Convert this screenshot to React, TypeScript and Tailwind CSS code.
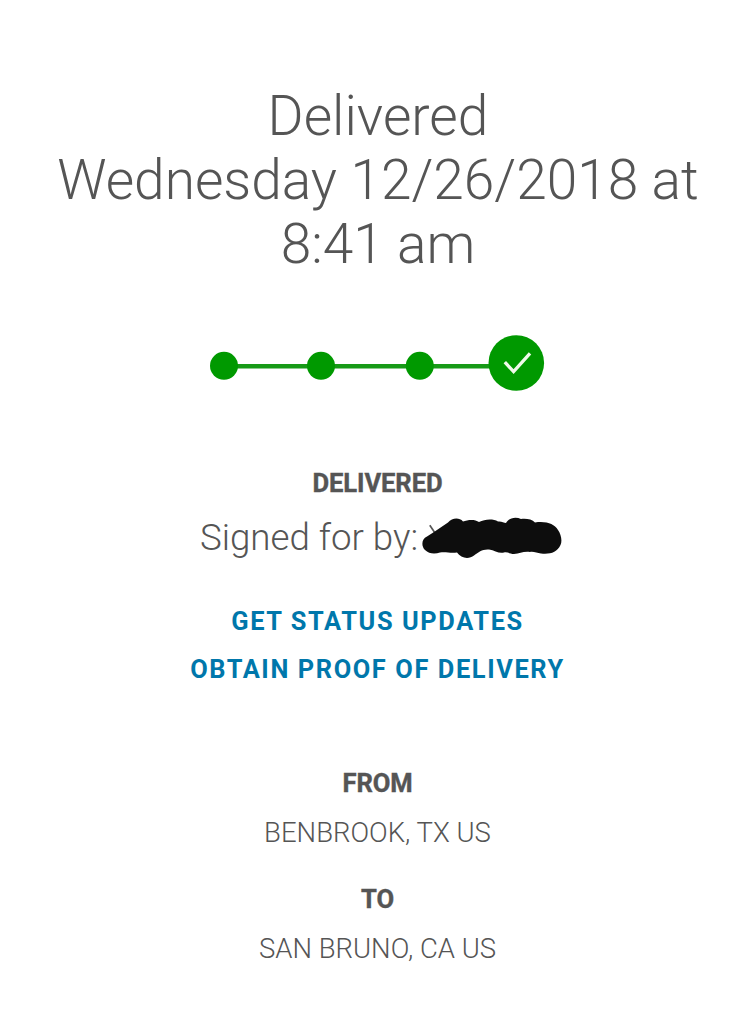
interface LocationProps {
    label: string
    place: string
}

function ProgressTracker() {
    return (
        <svg width="336" height="58" viewBox="209 334 336 58" role="img" aria-label="Delivered">
            <path d="M224 366.3H500" stroke="#179a17" strokeWidth="4.6"/>
            <g fill="#009900">
                <circle cx="224" cy="365.8" r="14"/>
                <circle cx="321" cy="365.8" r="14"/>
                <circle cx="419.8" cy="365.8" r="14"/>
                <circle cx="516.3" cy="363" r="27.8"/>
            </g>
            <path d="M504.8 362.2L513.6 371.6L530 353.4" fill="none" stroke="#f0faea" strokeWidth="3.3"/>
        </svg>
    )
}

function RedactedName() {
    return (
        <svg className="shrink-0" width="142" height="42" viewBox="421 516 142 42" aria-hidden="true">
            <path d="M429.8 524.3L435 532" stroke="#555" strokeWidth="1.7"/>
            <path
                fill="#0d0d0d"
                d="M434 531L448 521.5C452 517 459 516 463 520.5C468 518.5 475 518 479 521C485 518 493 517.5 498 520.5C501 520 504 521.5 506 522C509 516.5 516 515.5 521 518C526 517.5 532 518 535 521.5C547 520 554 523 558 529C561 533 562.5 540 560.5 544C557 551.5 550 553.5 541 552.5C537 552 533 550 530 551C523 550 520 553 514 553C510 553 507 550.5 504 551.5C499 553 495 549.5 489 548.5C482 548 479 551 474 554.5C469 558.5 461 557.5 457 551.5C450 552.5 446 550.5 440 551.5C435 553 429 553 425 549C421 545 421.5 538 427 535.5Z"
            />
        </svg>
    )
}

function Location({label, place}: LocationProps) {
    return (
        <section>
            <h2 className="text-[25.6px] leading-8 font-bold tracking-[-0.1px] [-webkit-text-stroke:0.4px]">{label}</h2>
            <p className="mt-4 text-[27.5px] leading-9 font-light">{place}</p>
        </section>
    )
}

export default function App() {
    return (
        <main className="flex min-h-screen flex-col items-center bg-white pt-[84px] text-center font-['Roboto',sans-serif] text-[#555555]">
            <h1 className="w-[682px] pl-0.5 text-[55px] leading-16 font-light">
                Delivered
                <br/>
                Wednesday 12/26/2018 at 8:41 am
            </h1>

            <div className="mt-[58px]">
                <ProgressTracker/>
            </div>

            <h2 className="mt-[75px] pl-px text-[25.6px] leading-8 font-bold tracking-[-0.1px] [-webkit-text-stroke:0.4px]">
                DELIVERED
            </h2>
            <div className="mt-[15px] flex h-12 w-[372px] items-center justify-between pl-[9px]">
                <p className="text-[36.7px] leading-12 font-light whitespace-nowrap">Signed for by:</p>
                <RedactedName/>
            </div>

            <nav className="mt-[35px] flex flex-col items-center pl-px text-[25.4px] leading-12 font-bold tracking-[1.6px] text-[#0077ab]">
                <a href="#">GET STATUS UPDATES</a>
                <a href="#">OBTAIN PROOF OF DELIVERY</a>
            </nav>

            <div className="mt-[74px] flex flex-col gap-8 pl-px">
                <Location label="FROM" place="BENBROOK, TX US"/>
                <Location label="TO" place="SAN BRUNO, CA US"/>
            </div>
        </main>
    )
}
